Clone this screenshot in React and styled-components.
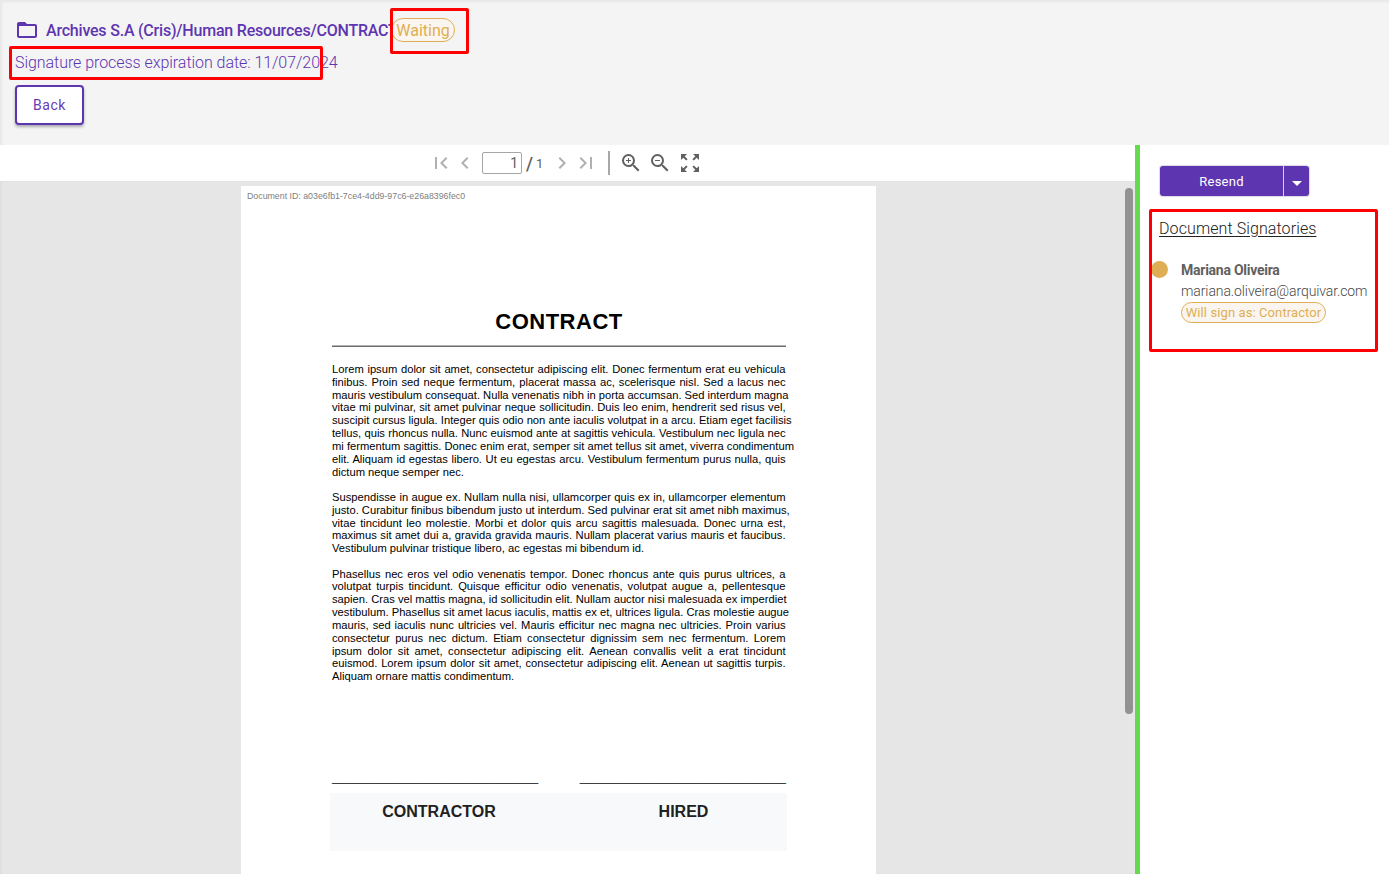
import React from "react";
import styled, { createGlobalStyle } from "styled-components";
import {
  MdFolderOpen, MdFirstPage, MdLastPage, MdChevronLeft, MdChevronRight,
  MdZoomIn, MdZoomOut, MdZoomOutMap,
} from "react-icons/md";

const Global = createGlobalStyle`
  * { box-sizing: border-box; }
  body { margin: 0; background: #fff; font-family: Roboto, "Open Sans", sans-serif; overflow: hidden; }
`;

const Screen = styled.div`
  position: relative;
  display: flex;
  flex-direction: column;
  width: 1389px;
  height: 874px;
  overflow: hidden;
`;

const Header = styled.header`
  height: 145px;
  flex: none;
  padding: 17px 15px 0;
  background: #f4f4f4;
  box-shadow: inset 2px 2px 3px rgba(0, 0, 0, 0.05);
  color: #5e35b1;
`;

const Breadcrumb = styled.div`
  display: flex;
  align-items: center;
  height: 26px;
  svg { flex: none; }
`;

const Path = styled.span`
  width: 345px;
  margin-left: 7px;
  font-size: 16px;
  font-weight: 500;
  letter-spacing: -0.21px;
  white-space: nowrap;
`;

const Pill = styled.span`
  display: inline-flex;
  align-items: center;
  justify-content: center;
  height: ${(p) => p.$h}px;
  width: ${(p) => p.$w}px;
  border: 1px solid #dfae54;
  border-radius: 12px;
  background: #faf6ef;
  color: #dfae54;
  font-size: ${(p) => p.$size}px;
  letter-spacing: ${(p) => p.$track}px;
  white-space: nowrap;
`;

const Expiration = styled.div`
  height: 42px;
  line-height: 40px;
  font-size: 16px;
  font-weight: 300;
  letter-spacing: -0.05px;
  white-space: nowrap;
`;

const BackButton = styled.button`
  display: block;
  width: 69px;
  height: 40px;
  padding: 0;
  border: 2px solid #5e35b1;
  border-radius: 4px;
  background: #fff;
  box-shadow: 0 2px 3px rgba(0, 0, 0, 0.3);
  color: #673ab7;
  font: 400 14px Roboto, sans-serif;
  letter-spacing: 0.5px;
`;

const Main = styled.main`
  display: flex;
  flex: 1;
  min-height: 0;
`;

const Viewer = styled.section`
  display: flex;
  flex-direction: column;
  width: 1135px;
`;

const Toolbar = styled.div`
  display: flex;
  align-items: center;
  height: 36px;
  flex: none;
  padding-left: 429px;
  background: #fff;
  color: #606060;
`;

const ToolIcon = styled.span`
  display: flex;
  margin-left: ${(p) => p.$gap || 0}px;
  color: ${(p) => (p.$muted ? "#b0b0b0" : "#606060")};
`;

const PageInput = styled.span`
  width: 40px;
  height: 22px;
  margin-left: 5px;
  padding-right: 3px;
  border: 1px solid #a6a6a6;
  border-radius: 2px;
  font-size: 14px;
  line-height: 21px;
  text-align: right;
`;

const Slash = styled.span`
  margin-left: 4px;
  font-size: 18px;
  font-weight: 500;
`;

const Total = styled.span`
  width: 13px;
  margin-left: 3px;
  font-size: 13px;
`;

const Divider = styled.span`
  width: 2px;
  height: 24px;
  margin-left: 10px;
  background: #a8a8a8;
`;

const Canvas = styled.div`
  display: flex;
  flex: 1;
  min-height: 0;
  padding: 5px 2px 0 241px;
  background: #e6e6e6;
  box-shadow: inset 2px 0 2px rgba(0, 0, 0, 0.03);
`;

const Sheet = styled.article`
  width: 635px;
  padding: 5px 89px 0 91px;
  background: #fff;
  color: #000;
  font-family: "Liberation Sans", Arial, sans-serif;
`;

const Scrollbar = styled.div`
  width: 8px;
  height: 526px;
  margin: 2px 0 0 auto;
  border-radius: 4px;
  background: #929292;
`;

const DocumentId = styled.div`
  margin-left: -85px;
  height: 12px;
  line-height: 11px;
  color: #808080;
  font-size: 8.8px;
  white-space: nowrap;
`;

const Title = styled.h1`
  margin: 104px 0 0;
  height: 39px;
  width: 454px;
  line-height: 30px;
  font-size: 22px;
  letter-spacing: 0.5px;
  text-align: center;
`;

const Rule = styled.div`
  width: 454px;
  height: 2px;
  margin: -1px 0 16px;
  border-top: 1px solid #b4b4b4;
  border-bottom: 1px solid #6c6c6c;
`;

const Paragraph = styled.div`
  width: 453.5px;
  margin-bottom: 12.5px;
  font-size: 11.2px;
  line-height: 12.83px;
`;

const Line = styled.div`
  text-align: justify;
  text-align-last: justify;
  white-space: nowrap;
  &:last-child { text-align-last: left; }
`;

const SignLines = styled.div`
  display: flex;
  justify-content: space-between;
  width: 454px;
  height: 14px;
  margin-top: 89px;
  font-size: 11.24px;
  line-height: 13px;
`;

const Parties = styled.div`
  display: flex;
  width: 457px;
  height: 58px;
  margin: 7px 0 0 -2px;
  padding-top: 9px;
  background: #f8f9fb;
  color: #212121;
`;

const Party = styled.div`
  width: ${(p) => p.$w}px;
  margin-left: ${(p) => p.$gap || 0}px;
  font-size: 16px;
  font-weight: 700;
  line-height: 20px;
  text-align: center;
`;

const Side = styled.aside`
  flex: 1;
  padding: 21px 0 0 20px;
  border-left: 5px solid #66d94f;
  background: #fff;
`;

const SplitButton = styled.div`
  display: flex;
  width: 149px;
  height: 30px;
  border-radius: 3px;
  background: #5e35b1;
  box-shadow: 0 0 1px 1px #dcd8e6;
  color: #fff;
`;

const SplitLabel = styled.span`
  width: 124px;
  border-right: 1px solid #d8d0e8;
  font-size: 13px;
  letter-spacing: 0.25px;
  line-height: 31px;
  text-align: center;
`;

const SplitArrow = styled.span`
  display: flex;
  flex: 1;
  align-items: center;
  justify-content: center;
  padding-top: 5px;
`;

const SideTitle = styled.div`
  margin: 22px 0 0 -1px;
  color: #212121;
  font-size: 16px;
  font-weight: 300;
  letter-spacing: 0.1px;
  line-height: 22px;
  text-decoration: underline;
  text-underline-offset: 2px;
`;

const Signer = styled.div`
  display: flex;
  margin: 20px 0 0 -9px;
`;

const Dot = styled.span`
  flex: none;
  width: 17px;
  height: 17px;
  margin-top: 1px;
  border-radius: 50%;
  background: #dfae54;
`;

const SignerInfo = styled.div`
  display: flex;
  flex-direction: column;
  align-items: flex-start;
  margin-left: 13px;
  color: #606060;
  font-size: 14px;
  line-height: 21px;
  white-space: nowrap;
`;

const Name = styled.span`
  font-weight: 700;
  letter-spacing: -0.25px;
`;

const Email = styled.span`
  letter-spacing: -0.1px;
  font-weight: 300;
  color: #484848;
`;

const Highlight = styled.div`
  position: absolute;
  left: ${(p) => p.$x}px;
  top: ${(p) => p.$y}px;
  width: ${(p) => p.$w}px;
  height: ${(p) => p.$h}px;
  border: 3px solid #f00;
  border-radius: 2px;
  pointer-events: none;
`;

const paragraphs = [
  [
    "Lorem ipsum dolor sit amet, consectetur adipiscing elit. Donec fermentum erat eu vehicula",
    "finibus. Proin sed neque fermentum, placerat massa ac, scelerisque nisl. Sed a lacus nec",
    "mauris vestibulum consequat. Nulla venenatis nibh in porta accumsan. Sed interdum magna",
    "vitae mi pulvinar, sit amet pulvinar neque sollicitudin. Duis leo enim, hendrerit sed risus vel,",
    "suscipit cursus ligula. Integer quis odio non ante iaculis volutpat in a arcu. Etiam eget facilisis",
    "tellus, quis rhoncus nulla. Nunc euismod ante at sagittis vehicula. Vestibulum nec ligula nec",
    "mi fermentum sagittis. Donec enim erat, semper sit amet tellus sit amet, viverra condimentum",
    "elit. Aliquam id egestas libero. Ut eu egestas arcu. Vestibulum fermentum purus nulla, quis",
    "dictum neque semper nec.",
  ],
  [
    "Suspendisse in augue ex. Nullam nulla nisi, ullamcorper quis ex in, ullamcorper elementum",
    "justo. Curabitur finibus bibendum justo ut interdum. Sed pulvinar erat sit amet nibh maximus,",
    "vitae tincidunt leo molestie. Morbi et dolor quis arcu sagittis malesuada. Donec urna est,",
    "maximus sit amet dui a, gravida gravida mauris. Nullam placerat varius mauris et faucibus.",
    "Vestibulum pulvinar tristique libero, ac egestas mi bibendum id.",
  ],
  [
    "Phasellus nec eros vel odio venenatis tempor. Donec rhoncus ante quis purus ultrices, a",
    "volutpat turpis tincidunt. Quisque efficitur odio venenatis, volutpat augue a, pellentesque",
    "sapien. Cras vel mattis magna, id sollicitudin elit. Nullam auctor nisi malesuada ex imperdiet",
    "vestibulum. Phasellus sit amet lacus iaculis, mattis ex et, ultrices ligula. Cras molestie augue",
    "mauris, sed iaculis nunc ultricies vel. Mauris efficitur nec magna nec ultricies. Proin varius",
    "consectetur purus nec dictum. Etiam consectetur dignissim sem nec fermentum. Lorem",
    "ipsum dolor sit amet, consectetur adipiscing elit. Aenean convallis velit a erat tincidunt",
    "euismod. Lorem ipsum dolor sit amet, consectetur adipiscing elit. Aenean ut sagittis turpis.",
    "Aliquam ornare mattis condimentum.",
  ],
];

const blank = "_".repeat(33);

export default function App() {
  return (
    <Screen>
      <Global />
      <Header>
        <Breadcrumb>
          <MdFolderOpen size={24} />
          <Path>Archives S.A (Cris)/Human Resources/CONTRACT.pdf</Path>
          <Pill $w={64} $h={24} $size={16} $track={0}>Waiting</Pill>
        </Breadcrumb>
        <Expiration>Signature process expiration date: 11/07/2024</Expiration>
        <BackButton>Back</BackButton>
      </Header>
      <Main>
        <Viewer>
          <Toolbar>
            <ToolIcon $muted><MdFirstPage size={24} /></ToolIcon>
            <ToolIcon $muted><MdChevronLeft size={24} /></ToolIcon>
            <PageInput>1</PageInput>
            <Slash>/</Slash>
            <Total>1</Total>
            <ToolIcon $muted $gap={1}><MdChevronRight size={24} /></ToolIcon>
            <ToolIcon $muted><MdLastPage size={24} /></ToolIcon>
            <Divider />
            <ToolIcon $gap={9}><MdZoomIn size={24} /></ToolIcon>
            <ToolIcon $gap={5}><MdZoomOut size={24} /></ToolIcon>
            <ToolIcon $gap={6}><MdZoomOutMap size={24} /></ToolIcon>
          </Toolbar>
          <Canvas>
            <Sheet>
              <DocumentId>Document ID: a03e6fb1-7ce4-4dd9-97c6-e26a8396fec0</DocumentId>
              <Title>CONTRACT</Title>
              <Rule />
              {paragraphs.map((lines, i) => (
                <Paragraph key={i}>
                  {lines.map((text) => <Line key={text}>{text}</Line>)}
                </Paragraph>
              ))}
              <SignLines>
                <span>{blank}</span>
                <span>{blank}</span>
              </SignLines>
              <Parties>
                <Party $w={218}>CONTRACTOR</Party>
                <Party $w={207} $gap={32}>HIRED</Party>
              </Parties>
            </Sheet>
            <Scrollbar />
          </Canvas>
        </Viewer>
        <Side>
          <SplitButton>
            <SplitLabel>Resend</SplitLabel>
            <SplitArrow>
              <svg width="10" height="5" viewBox="0 0 10 5"><path d="M0 0h10L5 5z" fill="#fff" /></svg>
            </SplitArrow>
          </SplitButton>
          <SideTitle>Document Signatories</SideTitle>
          <Signer>
            <Dot />
            <SignerInfo>
              <Name>Mariana Oliveira</Name>
              <Email>mariana.oliveira@arquivar.com</Email>
              <Pill $w={145} $h={21} $size={13} $track={0.1}>Will sign as: Contractor</Pill>
            </SignerInfo>
          </Signer>
        </Side>
      </Main>
      <Highlight $x={390} $y={8} $w={79} $h={46} />
      <Highlight $x={9} $y={46} $w={314} $h={34} />
      <Highlight $x={1149} $y={209} $w={229} $h={143} />
    </Screen>
  );
}
